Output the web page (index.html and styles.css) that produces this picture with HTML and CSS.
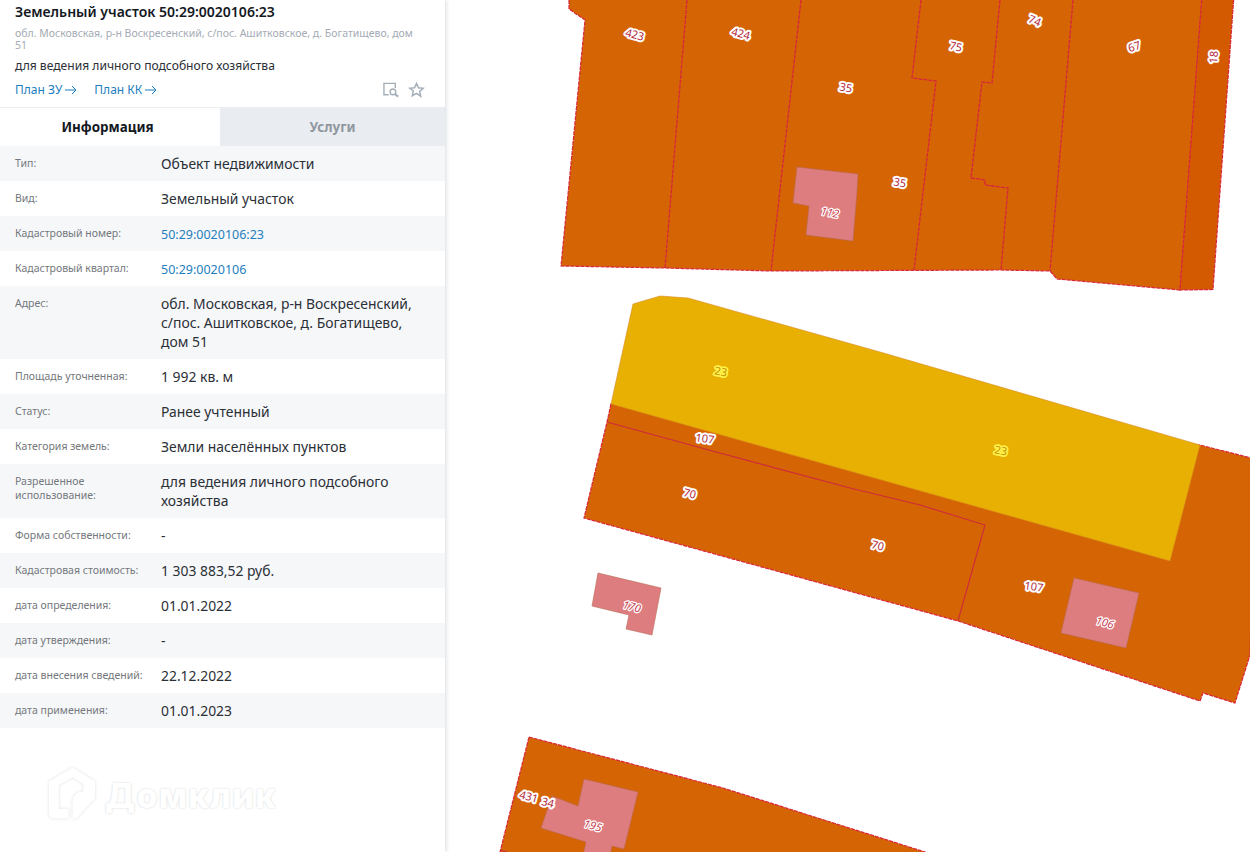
FILE: index.html
```html
<!DOCTYPE html>
<html lang="ru">
<head>
<meta charset="utf-8">
<title>Земельный участок 50:29:0020106:23</title>
<link rel="stylesheet" href="styles.css">
</head>
<body>
<div class="page">
  <aside class="sidebar">
    <header class="head">
      <h1 class="title">Земельный участок 50:29:0020106:23</h1>
      <p class="addr">обл. Московская, р-н Воскресенский, с/пос. Ашитковское, д. Богатищево, дом 51</p>
      <p class="use">для ведения личного подсобного хозяйства</p>
      <div class="actions">
        <a class="plan">План ЗУ<svg class="arrow" viewBox="0 0 12 10"><path d="M0 5h11M7 1l4 4-4 4"/></svg></a>
        <a class="plan">План КК<svg class="arrow" viewBox="0 0 12 10"><path d="M0 5h11M7 1l4 4-4 4"/></svg></a>
        <span class="tools">
          <svg class="tool" viewBox="0 0 18 16"><path d="M6 13H1V1h12v5"/><circle cx="10.500" cy="10" r="3"/><path class="thick" d="M13 12.500l3 2.500"/></svg>
          <svg class="tool" viewBox="0 0 16 16"><path d="M8 1.500l2 4.300 4.700.5-3.500 3.200 1 4.700L8 11.300l-4.200 2.400 1-4.700L1.300 6.300 6 5.800z"/></svg>
        </span>
      </div>
    </header>
    <nav class="tabs">
      <div class="tab tab-on">Информация</div>
      <div class="tab tab-off">Услуги</div>
    </nav>
    <dl class="rows">
      <div class="row"><dt>Тип:</dt><dd>Объект недвижимости</dd></div>
      <div class="row"><dt>Вид:</dt><dd>Земельный участок</dd></div>
      <div class="row"><dt>Кадастровый номер:</dt><dd class="link">50:29:0020106:23</dd></div>
      <div class="row"><dt>Кадастровый квартал:</dt><dd class="link">50:29:0020106</dd></div>
      <div class="row"><dt>Адрес:</dt><dd>обл. Московская, р-н Воскресенский, с/пос. Ашитковское, д. Богатищево, дом 51</dd></div>
      <div class="row"><dt>Площадь уточненная:</dt><dd>1 992 кв. м</dd></div>
      <div class="row"><dt>Статус:</dt><dd>Ранее учтенный</dd></div>
      <div class="row"><dt>Категория земель:</dt><dd>Земли населённых пунктов</dd></div>
      <div class="row"><dt>Разрешенное использование:</dt><dd>для ведения личного подсобного хозяйства</dd></div>
      <div class="row"><dt>Форма собственности:</dt><dd>-</dd></div>
      <div class="row"><dt>Кадастровая стоимость:</dt><dd>1 303 883,52 руб.</dd></div>
      <div class="row"><dt>дата определения:</dt><dd>01.01.2022</dd></div>
      <div class="row"><dt>дата утверждения:</dt><dd>-</dd></div>
      <div class="row"><dt>дата внесения сведений:</dt><dd>22.12.2022</dd></div>
      <div class="row"><dt>дата применения:</dt><dd>01.01.2023</dd></div>
    </dl>
    <div class="brand">
      <svg class="brand-icon" viewBox="0 0 50 54"><path d="M25 1L48 15V32L29 53H25V35Q25 27 36 25V18L25 11L11 19V43H21V53H6Q1 53 1 48V15Z"/></svg>
      <span class="brand-text">Домклик</span>
    </div>
  </aside>
  <main class="map">
    <svg class="map-svg" viewBox="445 0 805 852">
      <polygon class="lot" points="569,-5 569,9 585,20 561,266 665,268 771,271 1000,270 1050,271 1057,279 1180,290 1202,0 1205,-5"/>
      <polygon class="lot-dark" points="1202,-5 1180,290 1213,289.500 1234,-5"/>
      <polyline class="edge" points="687,0 665,268"/>
      <polyline class="edge" points="801,0 771,271"/>
      <polyline class="edge" points="921,0 912,78 936,81 914,270"/>
      <polyline class="edge" points="1000,0 992,83 982,82 971,178 985,180 985,185 1008,188 1001,270"/>
      <polyline class="edge" points="1073,0 1050,271"/>
      <polygon class="bld" points="797,167 858,174 857,192 853,241 806,235 809,206 793,203"/>

      <polygon class="lot" points="611,404 607,422 584,518 958,621 1200,701 1203,693 1235,703 1250,655 1255,459 1200,445"/>
      <polyline class="edge-thin" points="607,422 705,449 850,488 920,505 985,525 958,621"/>
      <polygon class="yellow" points="633,304 660,296 688,298 880,352 1200,445 1170,561 611,404"/>
      <polygon class="bld" points="1074,578 1139,593 1126,648 1061,633"/>
      <polygon class="bld" points="598,573 661,588 652,635 626,629 629,615 592,606"/>

      <polygon class="lot" points="529,737 723,788 925,852 925,860 498,860"/>
      <polyline class="edge-thin" points="500,850 520,856"/>
      <polygon class="bld" points="584,779 638,792 624,849 612,846 609,860 582,860 586,842 541,828 552,796 578,806"/>

      <text class="lbl" transform="translate(635 34) rotate(15)">423</text>
      <text class="lbl" transform="translate(741 33) rotate(15)">424</text>
      <text class="lbl" transform="translate(846 87) rotate(10)">35</text>
      <text class="lbl" transform="translate(900 182) rotate(10)">35</text>
      <text class="lbl lbl-i" transform="translate(830 212) rotate(10)">112</text>
      <text class="lbl" transform="translate(956 46) rotate(12)">75</text>
      <text class="lbl" transform="translate(1035 20) rotate(22)">74</text>
      <text class="lbl" transform="translate(1134 46) rotate(-18)">67</text>
      <text class="lbl" transform="translate(1213 57) rotate(-85)">18</text>
      <text class="lbl lbl-y" transform="translate(721 371) rotate(10)">23</text>
      <text class="lbl lbl-y" transform="translate(1001 450) rotate(10)">23</text>
      <text class="lbl" transform="translate(705 438) rotate(8)">107</text>
      <text class="lbl" transform="translate(690 493) rotate(15)">70</text>
      <text class="lbl" transform="translate(878 545) rotate(15)">70</text>
      <text class="lbl" transform="translate(1034 586) rotate(8)">107</text>
      <text class="lbl lbl-i" transform="translate(1105 622) rotate(15)">106</text>
      <text class="lbl lbl-i" transform="translate(632 606) rotate(15)">170</text>
      <text class="lbl" transform="translate(529 796) rotate(15)">431</text>
      <text class="lbl" transform="translate(548 802) rotate(15)">34</text>
      <text class="lbl lbl-i" transform="translate(593 825) rotate(15)">195</text>
    </svg>
  </main>
</div>
</body>
</html>
```
FILE: styles.css
```css
* { box-sizing: border-box; }
html, body { margin: 0; height: 100%; overflow: hidden; background: #fff; }
body { font-family: "Noto Sans", "Open Sans", "Liberation Sans", sans-serif; color: #222; }
.page { display: flex; height: 852px; }

.sidebar {
  width: 445px;
  flex: none;
  display: flex;
  flex-direction: column;
  background: #fff;
  box-shadow: 1px 0 4px rgba(40, 50, 70, .18);
  position: relative;
  z-index: 1;
}
.head { height: 108px; padding: 3px 15px 0; border-bottom: 1px solid #e9ecf0; }
.title { margin: 0; font-size: 14px; font-weight: 600; line-height: 17px; color: #14181f; }
.addr { margin: 7px 0 0; padding-right: 15px; font-size: 10.500px; line-height: 12px; color: #a4abb5; }
.use { margin: 6px 0 0; font-size: 12.100px; line-height: 17px; color: #2b2f36; }
.actions { display: flex; align-items: center; gap: 17px; margin-top: 8px; }
.plan { display: flex; align-items: center; gap: 3px; font-size: 12px; line-height: 16px; color: #1e7ec0; }
.arrow { width: 12px; height: 10px; fill: none; stroke: #1e7ec0; stroke-width: 1; }
.tools { margin-left: auto; margin-right: 5px; display: flex; align-items: center; gap: 8px; }
.tool { width: 17px; height: 16px; fill: none; stroke: #a5afba; stroke-width: 1.500; }
.thick { stroke-width: 2.200; }

.tabs { display: flex; height: 38px; flex: none; }
.tab { display: flex; align-items: center; justify-content: center; font-size: 13.400px; font-weight: 700; }
.tab-on { width: 220px; padding-right: 5px; color: #14181f; }
.tab-off { flex: 1; background: #e9ecf1; color: #8f979f; }

.rows { margin: 0; }
.row { display: grid; grid-template-columns: 146px 1fr; padding: 8px 25px 8px 15px; }
.row:nth-child(odd) { background: #f6f7f9; }
.row dt { margin-top: 2px; font-size: 10.500px; line-height: 14px; color: #73777c; padding-right: 10px; }
.row dd { margin: 0; font-size: 13.900px; line-height: 19px; color: #2b2f36; }
.row dd.link { font-size: 12.500px; padding-top: 2px; line-height: 17px; color: #1e7ec0; }

.brand { display: flex; align-items: center; gap: 8px; padding: 38px 0 0 48px; }
.brand-icon { width: 49px; height: 54px; fill: #fff; filter: drop-shadow(0 0 1.500px rgba(60, 70, 90, .18)); }
.brand-text { margin-top: 6px; font-family: "Inter", "Noto Sans", sans-serif; font-size: 34px; line-height: 36px; letter-spacing: 1.300px; font-weight: 800; color: #fff; text-shadow: 0 0 2px rgba(60, 70, 90, .25); }

.map { flex: 1; min-width: 0; position: relative; }
.map-svg { display: block; width: 805px; height: 852px; }
.lot { fill: #d46404; stroke: #d9263c; stroke-width: 1.200; stroke-dasharray: 4 1; }
.lot-dark { fill: #d45a02; stroke: #d9263c; stroke-width: 1.200; stroke-dasharray: 4 1; }
.yellow { fill: #e8b002; stroke: #d98a20; stroke-width: .6; }
.edge { fill: none; stroke: #d9263c; stroke-width: 1.300; stroke-dasharray: 4 1; }
.edge-thin { fill: none; stroke: #cf2a3c; stroke-width: 1.100; }
.bld { fill: #de7d80; stroke: #b96a55; stroke-width: .6; }
.lbl {
  font-family: "Noto Sans", sans-serif;
  font-size: 11px;
  fill: #b3273c;
  stroke: #fff;
  stroke-width: 4px;
  stroke-linejoin: round;
  paint-order: stroke;
  text-anchor: middle;
  dominant-baseline: central;
}
.lbl-i { font-style: italic; fill: #c44050; stroke-width: 2.500px; }
.lbl-y { fill: #c49000; stroke: #fff14a; stroke-width: 3.500px; }
```
